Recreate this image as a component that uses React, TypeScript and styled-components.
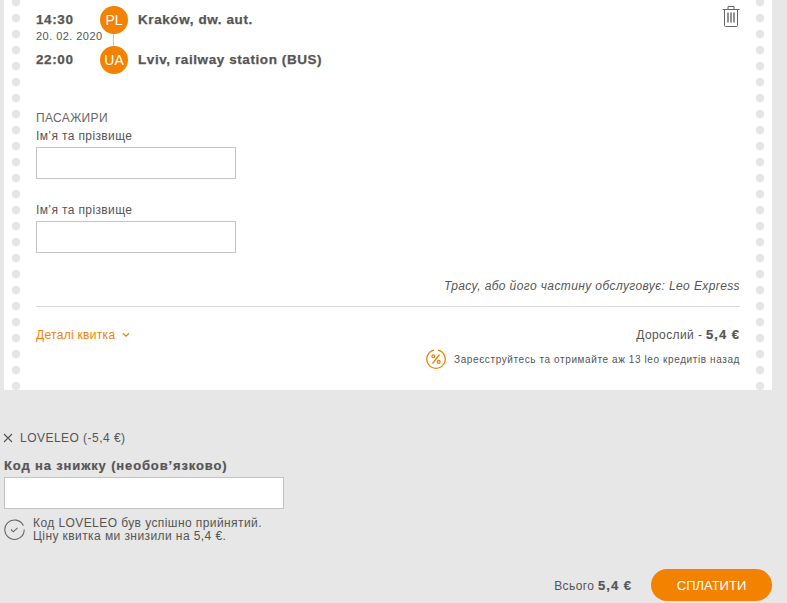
import styled, { createGlobalStyle } from 'styled-components';

const GlobalStyle = createGlobalStyle`
  html, body {
    margin: 0;
    padding: 0;
    background: #e7e7e7;
    height: 603px;
    overflow: hidden;
  }
  * {
    box-sizing: border-box;
  }
  body {
    font-family: "Liberation Sans", Arial, sans-serif;
    color: #555;
  }
`;

const Page = styled.div`
  width: 787px;
  height: 603px;
  background: #e7e7e7;
`;

const Ticket = styled.div`
  width: 768px;
  height: 390px;
  margin-left: 4px;
  padding: 6px 32px 0;
  background-color: #fff;
  background-image: radial-gradient(circle at center, #e7e7e7 4px, transparent 4.6px),
    radial-gradient(circle at center, #e7e7e7 4px, transparent 4.6px);
  background-size: 16px 16px, 16px 16px;
  background-position: 4px -6px, 748px -6px;
  background-repeat: repeat-y, repeat-y;
`;

const Route = styled.div`
  display: grid;
  grid-template-columns: 64px 28px 1fr;
  grid-auto-rows: 28px;
  row-gap: 12px;
  align-items: center;
  position: relative;
`;

const Time = styled.div`
  font-size: 13.5px;
  font-weight: 700;
  letter-spacing: 0.6px;
  padding-bottom: 2px;
  -webkit-text-stroke: 0.25px #555;
`;

const DateText = styled.div`
  position: absolute;
  left: 0;
  top: 24px;
  font-size: 11px;
  letter-spacing: 0.45px;
  line-height: 13px;
`;

const Badge = styled.div`
  width: 28px;
  height: 28px;
  border-radius: 50%;
  background: #f38200;
  color: #fff;
  font-size: 14px;
  display: flex;
  align-items: center;
  justify-content: center;
  position: relative;
  z-index: 1;
`;

const Connector = styled.div`
  position: absolute;
  left: 77px;
  top: 26px;
  width: 1px;
  height: 16px;
  background: #c4c4c4;
`;

const Place = styled.div`
  padding-left: 10px;
  padding-bottom: 2px;
  font-size: 13.5px;
  font-weight: 700;
  letter-spacing: 0.58px;
  -webkit-text-stroke: 0.25px #555;
`;

const TrashButton = styled.div`
  position: absolute;
  right: 0;
  top: 0;
  width: 18px;
  height: 21px;
  color: #666;
`;

const Passengers = styled.div`
  margin-top: 36px;
`;

const SectionTitle = styled.div`
  font-size: 12px;
  line-height: 16px;
  letter-spacing: 0.35px;
  color: #666;
`;

const Field = styled.div`
  margin-bottom: 23px;
`;

const FieldLabel = styled.div`
  font-size: 12px;
  line-height: 16px;
  margin-top: 2px;
  margin-bottom: 3px;
  letter-spacing: 0.38px;
`;

const TextInput = styled.input`
  display: block;
  width: ${(p: { $width: number }) => p.$width}px;
  height: 32px;
  border: 1px solid #c4c4c4;
  background: #fff;
  outline: none;
`;

const Operator = styled.div`
  margin-top: 26px;
  font-size: 12px;
  font-style: italic;
  line-height: 14px;
  text-align: right;
  letter-spacing: 0.39px;
`;

const Divider = styled.div`
  margin-top: 13px;
  height: 1px;
  background: #dcdcdc;
`;

const PriceRow = styled.div`
  display: flex;
  justify-content: space-between;
  align-items: center;
  margin-top: 21px;
  height: 14px;
`;

const DetailsLink = styled.a`
  display: flex;
  align-items: center;
  gap: 7px;
  font-size: 12px;
  letter-spacing: 0.3px;
  color: #f38200;
`;

const Price = styled.div`
  font-size: 12px;
  letter-spacing: 0.4px;
  padding-bottom: 2px;

  b {
    font-size: 13px;
    letter-spacing: 1px;
    -webkit-text-stroke: 0.2px #555;
  }
`;

const CreditRow = styled.div`
  display: flex;
  justify-content: flex-end;
  align-items: center;
  gap: 8px;
  margin-top: 7px;
  font-size: 10px;
  letter-spacing: 0.6px;
`;

const Lower = styled.div`
  padding: 41px 0 0 4px;
`;

const Applied = styled.div`
  display: flex;
  align-items: center;
  gap: 7px;
  margin-left: -1px;
  font-size: 12px;
  line-height: 14px;
  letter-spacing: 0.47px;
`;

const CodeLabel = styled.div`
  margin-top: 13px;
  margin-bottom: 3px;
  font-size: 13px;
  line-height: 16px;
  font-weight: 700;
  letter-spacing: 0.86px;
  -webkit-text-stroke: 0.2px #555;
`;

const Notice = styled.div`
  display: flex;
  gap: 8px;
  margin-top: 8px;
  font-size: 12px;
  line-height: 13px;
  letter-spacing: 0.42px;

  svg {
    margin-top: 2px;
    flex: none;
  }
`;

const Footer = styled.div`
  display: flex;
  justify-content: flex-end;
  align-items: center;
  gap: 19px;
  margin-top: 26px;
  padding-right: 15px;
`;

const Total = styled.div`
  font-size: 12px;
  letter-spacing: 0.4px;

  b {
    font-size: 13px;
    letter-spacing: 1px;
    -webkit-text-stroke: 0.2px #555;
  }
`;

const PayButton = styled.button`
  width: 121px;
  height: 32px;
  border: 0;
  border-radius: 16px;
  background: #f38200;
  color: #fff;
  font-family: inherit;
  font-size: 13px;
  letter-spacing: 0;
  padding: 0;
`;

const TrashIcon = () => (
  <svg width="18" height="21" viewBox="0 0 18 21" fill="none" stroke="currentColor" strokeWidth="1">
    <path d="M0.5 3.5h17M6 3.5V0.5h6v3M2.5 3.5v16a1 1 0 0 0 1 1h11a1 1 0 0 0 1-1v-16" />
    <path d="M6 6.5v10M9 6.5v10M12 6.5v10" strokeWidth="1.4" />
  </svg>
);

const ChevronIcon = () => (
  <svg width="8" height="6" viewBox="0 0 8 6" fill="none" stroke="#f38200" strokeWidth="1.3">
    <path d="M1 1.2l3 3 3-3" />
  </svg>
);

const PercentIcon = () => (
  <svg width="20" height="20" viewBox="0 0 20 20" fill="none" stroke="#f38200" strokeWidth="1.3">
    <path d="M12 1.1a9.2 9.2 0 1 1-4 0" />
    <path d="M13.5 5.5l-7 9" />
    <circle cx="7.3" cy="7.3" r="1.4" />
    <circle cx="12.7" cy="12.9" r="1.4" />
  </svg>
);

const CloseIcon = () => (
  <svg width="10" height="10" viewBox="0 0 10 10" fill="none" stroke="#555" strokeWidth="1.1">
    <path d="M1 1l8 8M9 1l-8 8" />
  </svg>
);

const CheckIcon = () => (
  <svg width="21" height="21" viewBox="0 0 21 21" fill="none" stroke="#666" strokeWidth="1.1">
    <path d="M19.4 6.8A9.7 9.7 0 1 0 20.2 10.5" />
    <path d="M7 10.5l2.3 2.3 4.2-4" />
  </svg>
);

export default function App() {
  return (
    <Page>
      <GlobalStyle />
      <Ticket>
        <Route>
          <Time>14:30</Time>
          <Badge>PL</Badge>
          <Place>Kraków, dw. aut.</Place>
          <Time>22:00</Time>
          <Badge>UA</Badge>
          <Place>Lviv, railway station (BUS)</Place>
          <DateText>20. 02. 2020</DateText>
          <Connector />
          <TrashButton>
            <TrashIcon />
          </TrashButton>
        </Route>
        <Passengers>
          <SectionTitle>ПАСАЖИРИ</SectionTitle>
          <Field>
            <FieldLabel>Ім’я та прізвище</FieldLabel>
            <TextInput $width={200} />
          </Field>
          <Field>
            <FieldLabel>Ім’я та прізвище</FieldLabel>
            <TextInput $width={200} />
          </Field>
        </Passengers>
        <Operator>Трасу, або його частину обслуговує: Leo Express</Operator>
        <Divider />
        <PriceRow>
          <DetailsLink>
            Деталі квитка <ChevronIcon />
          </DetailsLink>
          <Price>
            Дорослий - <b>5,4 €</b>
          </Price>
        </PriceRow>
        <CreditRow>
          <PercentIcon />
          Зареєструйтесь та отримайте аж 13 leo кредитів назад
        </CreditRow>
      </Ticket>
      <Lower>
        <Applied>
          <CloseIcon />
          LOVELEO (-5,4 €)
        </Applied>
        <CodeLabel>Код на знижку (необов’язково)</CodeLabel>
        <TextInput $width={280} />
        <Notice>
          <CheckIcon />
          <div>
            Код LOVELEO був успішно прийнятий.
            <br />
            Ціну квитка ми знизили на 5,4 €.
          </div>
        </Notice>
        <Footer>
          <Total>
            Всього <b>5,4 €</b>
          </Total>
          <PayButton>СПЛАТИТИ</PayButton>
        </Footer>
      </Lower>
    </Page>
  );
}
